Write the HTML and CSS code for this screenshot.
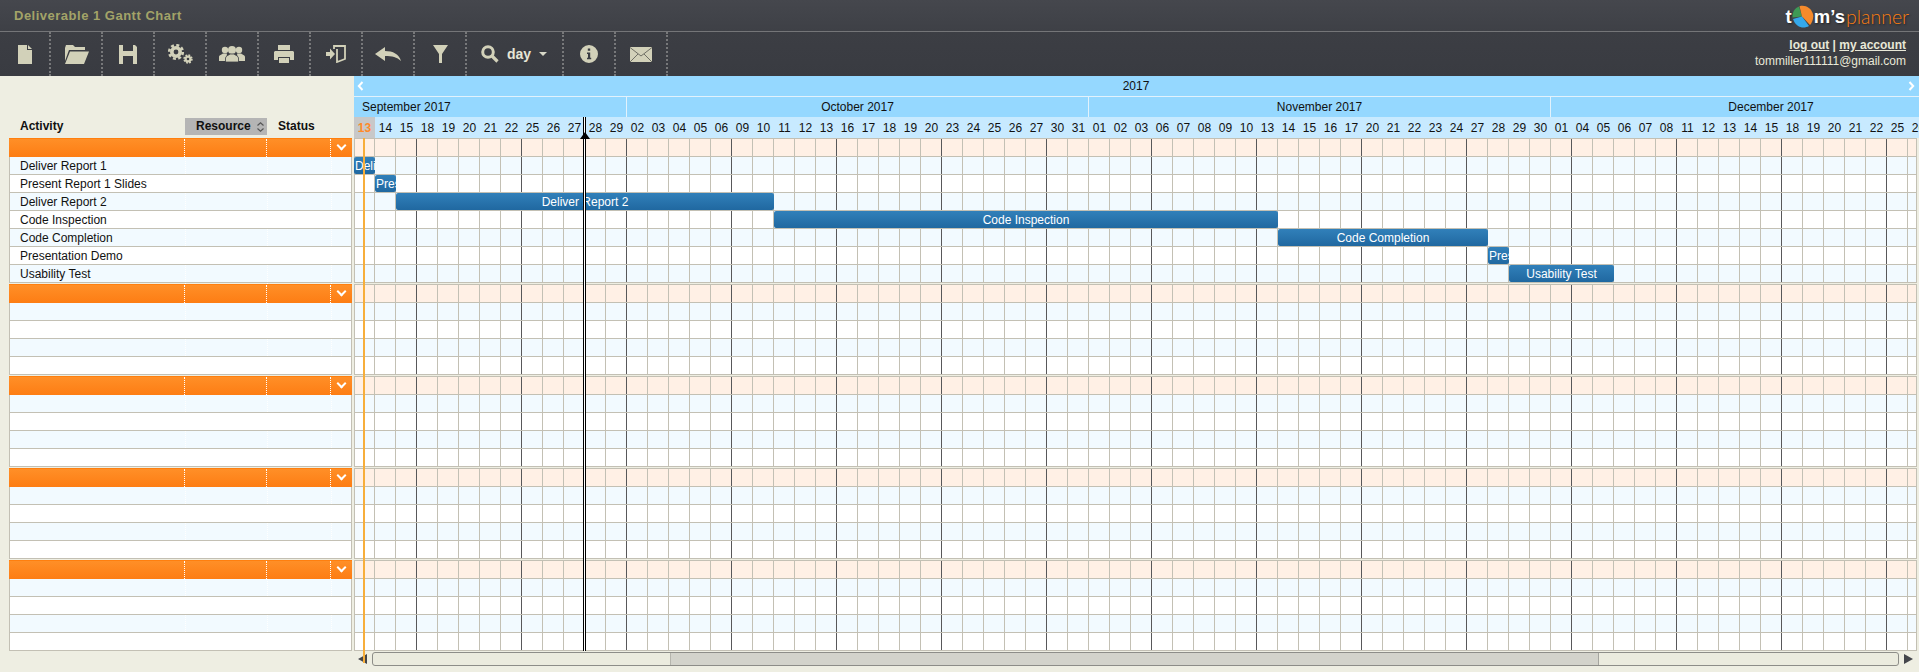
FILE: index.html
```html
<!DOCTYPE html>
<html lang="en">
<head>
  <meta charset="utf-8">
  <title>Deliverable 1 Gantt Chart</title>
  <link rel="stylesheet" href="styles.css">
</head>
<body>
  <header class="title-bar">
    <h1 class="plan-title">Deliverable 1 Gantt Chart</h1>
    <div class="logo">
      <span class="logo-bold">t</span>
      <svg class="logo-pie" width="22" height="23" viewBox="0 0 22 23">
        <path d="M10 11.5L7 1.5C3 3 0 7 0.5 12.5Z" fill="#3e9a55"/>
        <path d="M10 11.5L7.5 1.2C13 -0.5 19 2.5 21 9C22 13 20 18 18 20Z" fill="#f58a2c"/>
        <path d="M10 11.5L17 21C12 24 4 23 1 14Z" fill="#35a8ea"/>
      </svg>
      <span class="logo-bold">m’s</span><span class="logo-light">planner</span>
    </div>
  </header>

  <nav class="toolbar">
    <a class="tool tool-first">
      <svg width="14" height="19" viewBox="0 0 14 19"><path d="M0 0H9V5H14V19H0ZM10 0L14 4H10Z"/></svg>
    </a>
    <a class="tool">
      <svg width="25" height="19" viewBox="0 0 25 19"><path d="M1 3L2 0H9L11 2H21V5H5L1 16ZM6 6.5H25L20 19H1Z"/></svg>
    </a>
    <a class="tool">
      <svg width="18" height="19" viewBox="0 0 18 19"><path d="M0 0H4V6H14V0H16L18 2V19H14V11H4V19H0Z"/></svg>
    </a>
    <a class="tool">
      <svg width="25" height="20" viewBox="0 0 25 20">
        <circle cx="8" cy="8" r="4.2" class="ring" stroke-width="3.6"/>
        <circle cx="8" cy="8" r="6.8" class="ring" stroke-width="2.6" stroke-dasharray="3 2.35"/>
        <circle cx="20" cy="15" r="2.4" class="ring" stroke-width="2.2"/>
        <circle cx="20" cy="15" r="3.9" class="ring" stroke-width="1.6" stroke-dasharray="1.8 1.26"/>
      </svg>
    </a>
    <a class="tool">
      <svg width="26" height="16" viewBox="0 0 26 16">
        <circle cx="6" cy="4" r="3.2"/><circle cx="20" cy="4" r="3.2"/>
        <path d="M0 15V11C0 9 3 8.500 4 7.500H8L7 15ZM26 15V11C26 9 23 8.500 22 7.500H18L19 15Z"/>
        <circle cx="13" cy="4" r="4"/>
        <path d="M6.500 16V12C6.500 10 10 9 11 8H15C16 9 19.500 10 19.500 12V16Z" stroke="#3a3c42" stroke-width="0.8"/>
      </svg>
    </a>
    <a class="tool">
      <svg width="20" height="18" viewBox="0 0 20 18"><path d="M4 0H16V5H4ZM1 6H19L20 7V15H16V12H4V15H0V7ZM5 13H15V18H5Z"/></svg>
    </a>
    <a class="tool">
      <svg width="20" height="18" viewBox="0 0 20 18">
        <path d="M0 7H4V3.500L9 9L4 14.500V11H0Z"/>
        <path d="M8 4V1H19V14L11 17V4" fill="none" stroke="#d2d1b9" stroke-width="1.800"/>
      </svg>
    </a>
    <a class="tool">
      <svg width="26" height="14" viewBox="0 0 26 14"><path d="M0 7L10 0V4C18 4 24 7 26 14C22 10 17 9 10 9V14Z"/></svg>
    </a>
    <a class="tool">
      <svg width="15" height="18" viewBox="0 0 15 18"><path d="M0 0H15L9 9V18H6V9Z"/></svg>
    </a>
    <a class="tool tool-zoom">
      <svg width="18" height="18" viewBox="0 0 18 18">
        <circle cx="7" cy="7" r="5.300" class="ring" stroke-width="3"/>
        <path d="M11 11L16.500 16.500" fill="none" stroke="#d2d1b9" stroke-width="3.200"/>
      </svg>
      <span class="zoom-label">day</span>
      <span class="caret"></span>
    </a>
    <a class="tool">
      <svg width="18" height="18" viewBox="0 0 18 18">
        <path fill-rule="evenodd" d="M9 0A9 9 0 1 0 9 18A9 9 0 1 0 9 0ZM7.800 3.500H10.200V5.800H7.800ZM7 7.500H10.200V12.800H11.200V14.300H7V12.800H8V9H7Z"/>
      </svg>
    </a>
    <a class="tool">
      <svg width="22" height="15" viewBox="0 0 22 15">
        <path d="M0 0H22V15H0Z"/>
        <path d="M0 0.500L11 9L22 0.500M0 15L8 7M22 15L14 7" fill="none" stroke="#55564f" stroke-width="0.800"/>
      </svg>
    </a>
    <div class="account">
      <div class="account-links"><a href="#">log out</a> | <a href="#">my account</a></div>
      <div>tommiller111111@gmail.com</div>
    </div>
  </nav>

  <main class="planner">
    <section class="activities">
      <div class="col-head">
        <div class="col">Activity</div>
        <div class="col col-sorted">Resource
          <svg width="7" height="10" viewBox="0 0 7 10"><path d="M0.500 3.500L3.500 0.800L6.500 3.500M0.500 6.500L3.500 9.200L6.500 6.500" fill="none" stroke="#555" stroke-width="1.200"/></svg>
        </div>
        <div class="col">Status</div>
      </div>

      <div class="group">
        <div class="group-head"><span></span><span></span><span></span><span class="chevron"></span></div>
        <div class="task"><span>Deliver Report 1</span><span></span><span></span></div>
        <div class="task"><span>Present Report 1 Slides</span><span></span><span></span></div>
        <div class="task"><span>Deliver Report 2</span><span></span><span></span></div>
        <div class="task"><span>Code Inspection</span><span></span><span></span></div>
        <div class="task"><span>Code Completion</span><span></span><span></span></div>
        <div class="task"><span>Presentation Demo</span><span></span><span></span></div>
        <div class="task"><span>Usability Test</span><span></span><span></span></div>
      </div>
      <div class="group">
        <div class="group-head"><span></span><span></span><span></span><span class="chevron"></span></div>
        <div class="task"><span></span><span></span><span></span></div>
        <div class="task"><span></span><span></span><span></span></div>
        <div class="task"><span></span><span></span><span></span></div>
        <div class="task"><span></span><span></span><span></span></div>
      </div>
      <div class="group">
        <div class="group-head"><span></span><span></span><span></span><span class="chevron"></span></div>
        <div class="task"><span></span><span></span><span></span></div>
        <div class="task"><span></span><span></span><span></span></div>
        <div class="task"><span></span><span></span><span></span></div>
        <div class="task"><span></span><span></span><span></span></div>
      </div>
      <div class="group">
        <div class="group-head"><span></span><span></span><span></span><span class="chevron"></span></div>
        <div class="task"><span></span><span></span><span></span></div>
        <div class="task"><span></span><span></span><span></span></div>
        <div class="task"><span></span><span></span><span></span></div>
        <div class="task"><span></span><span></span><span></span></div>
      </div>
      <div class="group">
        <div class="group-head"><span></span><span></span><span></span><span class="chevron"></span></div>
        <div class="task"><span></span><span></span><span></span></div>
        <div class="task"><span></span><span></span><span></span></div>
        <div class="task"><span></span><span></span><span></span></div>
        <div class="task"><span></span><span></span><span></span></div>
      </div>
    </section>

    <section class="chart">
      <div class="year-band">
        <svg width="7" height="10" viewBox="0 0 7 10"><path d="M5.500 1L1.800 5L5.500 9" fill="none" stroke="#fff" stroke-width="2"/></svg>
        <span>2017</span>
        <svg width="7" height="10" viewBox="0 0 7 10"><path d="M1.500 1L5.200 5L1.500 9" fill="none" stroke="#fff" stroke-width="2"/></svg>
      </div>
      <div class="month-band">
        <div class="month month-sep">September 2017</div>
        <div class="month month-oct">October 2017</div>
        <div class="month month-nov">November 2017</div>
        <div class="month month-dec">December 2017</div>
      </div>
      <div class="day-band">
        <span class="day day-today">13</span><span class="day">14</span><span class="day">15</span><span class="day">18</span><span class="day">19</span><span class="day">20</span><span class="day">21</span><span class="day">22</span><span class="day">25</span><span class="day">26</span><span class="day">27</span><span class="day">28</span><span class="day">29</span>
        <span class="day">02</span><span class="day">03</span><span class="day">04</span><span class="day">05</span><span class="day">06</span><span class="day">09</span><span class="day">10</span><span class="day">11</span><span class="day">12</span><span class="day">13</span><span class="day">16</span><span class="day">17</span><span class="day">18</span><span class="day">19</span><span class="day">20</span><span class="day">23</span><span class="day">24</span><span class="day">25</span><span class="day">26</span><span class="day">27</span><span class="day">30</span><span class="day">31</span>
        <span class="day">01</span><span class="day">02</span><span class="day">03</span><span class="day">06</span><span class="day">07</span><span class="day">08</span><span class="day">09</span><span class="day">10</span><span class="day">13</span><span class="day">14</span><span class="day">15</span><span class="day">16</span><span class="day">17</span><span class="day">20</span><span class="day">21</span><span class="day">22</span><span class="day">23</span><span class="day">24</span><span class="day">27</span><span class="day">28</span><span class="day">29</span><span class="day">30</span>
        <span class="day">01</span><span class="day">04</span><span class="day">05</span><span class="day">06</span><span class="day">07</span><span class="day">08</span><span class="day">11</span><span class="day">12</span><span class="day">13</span><span class="day">14</span><span class="day">15</span><span class="day">18</span><span class="day">19</span><span class="day">20</span><span class="day">21</span><span class="day">22</span><span class="day">25</span><span class="day">26</span>
      </div>

      <div class="timeline">
        <div class="lane-group">
          <div class="lane lane-head"></div>
          <div class="lane"><div class="bar bar-clip" style="left:0;width:21px">Deliver Report 1</div></div>
          <div class="lane"><div class="bar bar-clip" style="left:21px;width:21px">Present Report 1 Slides</div></div>
          <div class="lane"><div class="bar" style="left:42px;width:378px">Deliver Report 2</div></div>
          <div class="lane"><div class="bar" style="left:420px;width:504px">Code Inspection</div></div>
          <div class="lane"><div class="bar" style="left:924px;width:210px">Code Completion</div></div>
          <div class="lane"><div class="bar bar-clip" style="left:1134px;width:21px">Presentation Demo</div></div>
          <div class="lane"><div class="bar" style="left:1155px;width:105px">Usability Test</div></div>
        </div>
        <div class="lane-group">
          <div class="lane lane-head"></div>
          <div class="lane"></div><div class="lane"></div><div class="lane"></div><div class="lane"></div>
        </div>
        <div class="lane-group">
          <div class="lane lane-head"></div>
          <div class="lane"></div><div class="lane"></div><div class="lane"></div><div class="lane"></div>
        </div>
        <div class="lane-group">
          <div class="lane lane-head"></div>
          <div class="lane"></div><div class="lane"></div><div class="lane"></div><div class="lane"></div>
        </div>
        <div class="lane-group">
          <div class="lane lane-head"></div>
          <div class="lane"></div><div class="lane"></div><div class="lane"></div><div class="lane"></div>
        </div>
      </div>

      <div class="scroller">
        <span class="arrow arrow-left"></span>
        <div class="scroll-track"><div class="scroll-thumb"></div></div>
        <span class="arrow arrow-right"></span>
      </div>

      <!-- markers sit on top of the bars -->
      <div class="today-line"></div>
      <div class="now-line"></div>
      <div class="now-tip"></div>
    </section>
  </main>
</body>
</html>
```

FILE: styles.css
```css
* {
  box-sizing: border-box;
}

html, body {
  margin: 0;
  height: 672px;
  overflow: hidden;
}

body {
  font-family: "Liberation Sans", Arial, sans-serif;
  font-size: 12px;
  color: #111;
  background-color: #eeeee2;
}

/* top bars */
.title-bar {
  display: flex;
  justify-content: space-between;
  align-items: flex-start;
  height: 32px;
  padding: 0 10px 0 14px;
  background: linear-gradient(#45474d, #3e4046);
  border-bottom: 1px solid #747578;
}

.plan-title {
  margin: 8px 0 0;
  font-size: 13px;
  line-height: 15px;
  letter-spacing: 0.5px;
  color: #a3a368;
}

.logo {
  display: flex;
  align-items: flex-start;
  margin-top: 5px;
  height: 24px;
  line-height: 24px;
  text-shadow: 1px 1px 2px #222;
}

.logo-bold {
  font-size: 18.5px;
  font-weight: bold;
  color: #fff;
}

.logo-pie {
  margin: 0;
}

.logo-light {
  font-family: Lato, "Liberation Sans", sans-serif;
  font-size: 19.5px;
  font-weight: 300;
  margin-left: 1px;
  color: #fb7d12;
}

.toolbar {
  display: flex;
  height: 44px;
  background: linear-gradient(#3c3e44, #393b41);
}

.tool {
  display: flex;
  align-items: center;
  justify-content: center;
  width: 52px;
  border-right: 2px dotted #77787a;
}

.tool-first {
  width: 51px;
}

.tool-zoom {
  width: 97px;
  gap: 8px;
  justify-content: flex-start;
  padding-left: 14px;
}

.tool svg {
  fill: #d2d1b9;
}

.tool .ring {
  fill: none;
  stroke: #d2d1b9;
}

.zoom-label {
  font-size: 14px;
  font-weight: bold;
  color: #e6e6d6;
}

.caret {
  width: 0;
  height: 0;
  border-left: 4px solid transparent;
  border-right: 4px solid transparent;
  border-top: 4px solid #d8d8c8;
}

.account {
  margin-left: auto;
  padding: 5px 13px 0 0;
  text-align: right;
  line-height: 16px;
  color: #e8e8d8;
}

.account-links {
  font-weight: bold;
}

.account-links a {
  color: #e8e8d8;
}

/* page body */
.planner {
  display: flex;
  height: 596px;
}

.activities {
  width: 354px;
  padding: 41px 2px 0 9px;
  flex-shrink: 0;
}

.col-head,
.group-head,
.task {
  display: grid;
  grid-template-columns: 176px 82px 64px 1fr;
}

.col-head {
  height: 21px;
  font-weight: bold;
  line-height: 19px;
}

.col {
  padding-left: 11px;
}

.col-sorted {
  display: flex;
  justify-content: space-between;
  align-items: center;
  height: 17px;
  margin-top: 1px;
  padding: 0 3px 0 11px;
  background-color: #b5b5b5;
}

.group {
  margin-bottom: 1px;
}

.group-head {
  height: 19px;
  background: linear-gradient(#ff8f27, #fd7d14);
  border-top: 1px solid #ff7f0e;
}

.group-head span {
  border-right: 1px dotted #fff;
}

.group-head .chevron {
  border: 0;
  position: relative;
}

.chevron::after {
  content: "";
  position: absolute;
  left: 7px;
  top: 3px;
  width: 5px;
  height: 5px;
  border-right: 2px solid #fff;
  border-bottom: 2px solid #fff;
  transform: rotate(45deg);
}

.task {
  height: 18px;
  line-height: 19px;
  background-color: #fff;
  border: 1px solid #c3c0b4;
  border-width: 0 1px 1px;
}

.task:nth-child(even) {
  background-color: #f2faff;
}

.task span {
  padding-left: 10px;
  white-space: nowrap;
}

.task:nth-child(even) span {
  border-right: 1px dotted #fff;
}

/* chart */
.chart {
  position: relative;
  flex: 1;
  min-width: 0;
  overflow: hidden;
}

.year-band {
  display: flex;
  justify-content: space-between;
  align-items: center;
  height: 21px;
  padding: 0 4px 0 3px;
  background-color: #95d8ff;
  border-bottom: 1px solid #e2f2fc;
}

.month-band {
  display: flex;
  height: 20px;
  line-height: 21px;
  background-color: #95d8ff;
}

.month {
  flex-shrink: 0;
  text-align: center;
  border-right: 1px solid #e2f2fc;
}

.month-sep {
  width: 273px;
  padding-left: 8px;
  text-align: left;
}

.month-oct,
.month-nov {
  width: 462px;
}

.month-dec {
  width: 441px;
}

.day-band {
  display: flex;
  height: 21px;
  line-height: 22px;
  background-color: #c8eaff;
}

.day {
  flex-shrink: 0;
  width: 21px;
  text-align: center;
}

.day-today {
  color: #ff8a2a;
  font-weight: bold;
  background-color: #c8c8c8;
}

.timeline {
  width: 1563px;
  height: 513px;
}

.lane-group {
  margin-bottom: 1px;
}

.lane {
  position: relative;
  height: 18px;
  background-color: #fff;
  background-image:
    linear-gradient(#c3c0b4, #c3c0b4),
    linear-gradient(#c3c0b4, #c3c0b4),
    linear-gradient(90deg, #58585a 1px, transparent 1px),
    linear-gradient(90deg, #c3c0b4 1px, transparent 1px);
  background-size: 1px 100%, 1px 100%, 105px 100%, 21px 100%;
  background-position: left 0 top 0, right 0 top 0, 62px 0, 20px 0;
  background-repeat: no-repeat, no-repeat, repeat-x, repeat-x;
  border-bottom: 1px solid #c3c0b4;
}

.lane:nth-child(even) {
  background-color: #f2faff;
}

.lane.lane-head {
  height: 19px;
  background-color: #fff0e5;
  border-top: 1px solid #c3c0b4;
}

.bar {
  position: absolute;
  top: 0;
  height: 17px;
  padding-top: 1px;
  overflow: hidden;
  border-radius: 2px;
  font-size: 12px;
  line-height: 16px;
  white-space: nowrap;
  text-align: center;
  color: #fff;
  background: linear-gradient(#3180ba, #2068a0);
}

.bar-clip {
  padding-left: 1px;
  text-align: left;
}

.scroller {
  display: flex;
  align-items: center;
  gap: 5px;
  height: 14px;
  margin-top: 1px;
  padding: 0 6px 0 4px;
}

.arrow {
  flex-shrink: 0;
  width: 0;
  height: 0;
  border-top: 5px solid transparent;
  border-bottom: 5px solid transparent;
}

.arrow-left {
  border-right: 9px solid #44464c;
}

.arrow-right {
  border-left: 9px solid #44464c;
}

.scroll-track {
  flex: 1;
  height: 14px;
  background-color: #ebebde;
  border: 1px solid #8d8d88;
  border-radius: 3px;
}

.scroll-thumb {
  width: 929px;
  height: 12px;
  margin-left: 297px;
  background-color: #d3d3cb;
  border-left: 1px solid #b5b5ad;
  border-right: 1px solid #a5a59f;
}

.today-line {
  position: absolute;
  left: 9px;
  top: 62px;
  width: 2px;
  height: 525px;
  background-color: #f7ae3b;
}

.now-line {
  position: absolute;
  left: 229px;
  top: 41px;
  width: 3px;
  height: 534px;
  background-color: #fff;
  border-left: 1px solid #000;
  border-right: 1px solid #000;
}

.now-tip {
  position: absolute;
  left: 225.500px;
  top: 56px;
  border-left: 5px solid transparent;
  border-right: 5px solid transparent;
  border-bottom: 7px solid #000;
}
```
